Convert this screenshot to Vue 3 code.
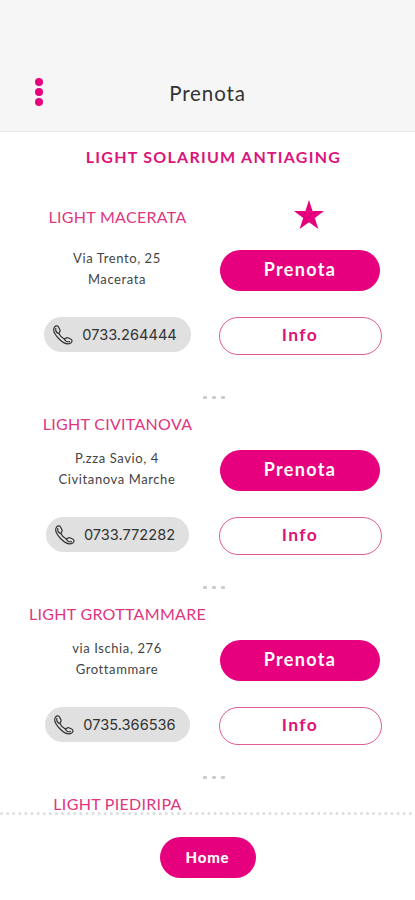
<template>
  <div class="app">
    <!-- ===== Header ===== -->
    <header class="header">
      <button class="menu" aria-label="Menu">
        <span v-for="n in 3" :key="n" class="menu-dot"></span>
      </button>
      <h1 class="page-title">Prenota</h1>
    </header>

    <!-- ===== Elenco centri ===== -->
    <main class="content">
      <h2 class="brand">LIGHT SOLARIUM ANTIAGING</h2>

      <section v-for="c in centers" :key="c.id" class="center" :class="{ favorite: c.favorite }">
        <div class="row title-row">
          <h3 class="name">{{ c.name }}</h3>
          <div class="star-box">
            <svg v-if="c.favorite" class="star" viewBox="0 0 30 30">
              <path d="M15 0 L18.6 11 H30 L20.8 17.9 L24.4 29 L15 22.2 L5.6 29 L9.2 17.9 L0 11 H11.4 Z" />
            </svg>
          </div>
        </div>

        <template v-if="c.phone">
          <div class="row">
            <div class="left">
              <p class="address">{{ c.street }}<br />{{ c.city }}</p>
              <a class="phone" :style="{ width: c.phoneWidth + 'px' }">
                <svg class="phone-icon" viewBox="0 0 20 20">
                  <path d="M1.6 2 C3 .3 5 .7 5.8 2.4 L7 5 C7.7 6.7 5.7 7.4 6.1 8.8 C7 10.9 8.9 12.8 11 13.7 C12.5 14.1 13 12 14.8 12.7 L17.6 14 C19.4 14.9 19.5 16.8 17.8 17.9 C14.6 19.8 9.8 17.7 6.1 14 C2.3 10.2 -.8 5.2 1.6 2 Z" />
                  <path d="M2.8 3 C2.3 5.6 3.8 7.9 6.1 8.8 M11 13.7 C12.2 15.9 14.5 17.1 17 16.6" />
                </svg>
                <span>{{ c.phone }}</span>
              </a>
            </div>
            <div class="right">
              <button class="btn btn-primary">Prenota</button>
              <button class="btn outline">Info</button>
            </div>
          </div>

          <div class="dots"><i></i><i></i><i></i></div>
        </template>
      </section>
    </main>

    <!-- ===== Footer ===== -->
    <footer class="footer">
      <svg class="divider" width="415" height="3">
        <line x1="1.5" y1="1.5" x2="415" y2="1.5" />
      </svg>
      <button class="btn home">Home</button>
    </footer>
  </div>
</template>

<script setup>
import { ref } from 'vue'

const centers = ref([
  { id: 1, name: 'LIGHT MACERATA', street: 'Via Trento, 25', city: 'Macerata', phone: '0733.264444', favorite: true, phoneWidth: 147 },
  { id: 2, name: 'LIGHT CIVITANOVA', street: 'P.zza Savio, 4', city: 'Civitanova Marche', phone: '0733.772282', favorite: false, phoneWidth: 143 },
  { id: 3, name: 'LIGHT GROTTAMMARE', street: 'via Ischia, 276', city: 'Grottammare', phone: '0735.366536', favorite: false, phoneWidth: 145 },
  { id: 4, name: 'LIGHT PIEDIRIPA', favorite: false },
])
</script>

<style>
body{margin:0;background:#fff}
</style>

<style scoped>
.app{height:900px;display:flex;flex-direction:column;overflow:hidden;background:#fff;color:#333;font-family:Lato,'Liberation Sans',sans-serif}
h1,h2,h3,p{margin:0}
button{font-family:inherit;cursor:pointer}

.header{box-sizing:border-box;flex:none;height:132px;padding:56px 35px 0;display:grid;grid-template-columns:40px 1fr 40px;align-items:center;background:#f6f6f6;border-bottom:1px solid #ebebeb}
.menu{border:0;background:none;padding:0 0 3px;display:flex;flex-direction:column;gap:2px;width:9px}
.menu-dot{width:8px;height:8px;border-radius:50%;background:#e6007e}
.page-title{text-align:center;font-size:20.5px;font-weight:400;letter-spacing:.9px;color:#333;padding-bottom:1px}

.content{flex:1;min-height:0;overflow:hidden}
.brand{padding:14px 0 0 12px;height:43px;line-height:22px;text-align:center;font-size:16px;font-weight:700;letter-spacing:1.25px;color:#dc147b;white-space:nowrap}

.center{height:190px}
.center.favorite{height:221px}
.row{display:flex}
.title-row{height:40px}
.favorite .title-row{height:61px}
.name{width:235px;text-align:center;line-height:28px;font-size:16px;font-weight:400;letter-spacing:.3px;color:#e0357f;white-space:nowrap}
.favorite .name{padding-top:14px}
.star-box{width:147px;text-align:center}
.star{width:30px;height:30px;margin-top:11px;fill:#e6007e}
.left{width:219px;padding-left:15px;box-sizing:border-box;display:flex;flex-direction:column;align-items:center}
.address{width:204px;height:69px;margin-top:-2px;text-align:center;font-size:13px;line-height:20.5px;letter-spacing:.6px;color:#444}
.phone{height:35px;box-sizing:border-box;padding-right:4px;border-radius:18px;background:#e0e0e0;display:flex;align-items:center;justify-content:center;gap:9px;font-family:Inter,sans-serif;font-size:14.6px;color:#333;white-space:nowrap}
.phone-icon{width:20px;height:20px;fill:none;stroke:#333;stroke-width:1.2}
.right{width:162px;display:flex;flex-direction:column;align-items:center;gap:26px}

.btn{box-sizing:border-box;border:0;padding:0 0 3px;border-radius:21px;font-size:18px;font-weight:700;letter-spacing:1.35px}
.btn-primary{width:160px;height:41px;background:#e6007e;color:#fff}
.btn.outline{width:163px;height:38px;background:#fff;border:1px solid #e25a98;color:#dc147b;font-size:17.5px}
.dots{display:flex;justify-content:center;gap:5px;padding:31px 0 0 12px}
.favorite .dots{padding-top:41px}
.dots i{width:4px;height:3px;border-radius:1px;background:#ccc}

.footer{flex:none;height:88px;display:flex;flex-direction:column;align-items:center;background:#fff}
.divider{display:block}
.divider line{stroke:#dedede;stroke-width:3;stroke-linecap:round;stroke-dasharray:.1 6}
.home{width:96px;height:41px;margin-top:22px;padding-bottom:2px;background:#e6007e;color:#fff;font-size:15px;font-weight:900;letter-spacing:.8px}
</style>
